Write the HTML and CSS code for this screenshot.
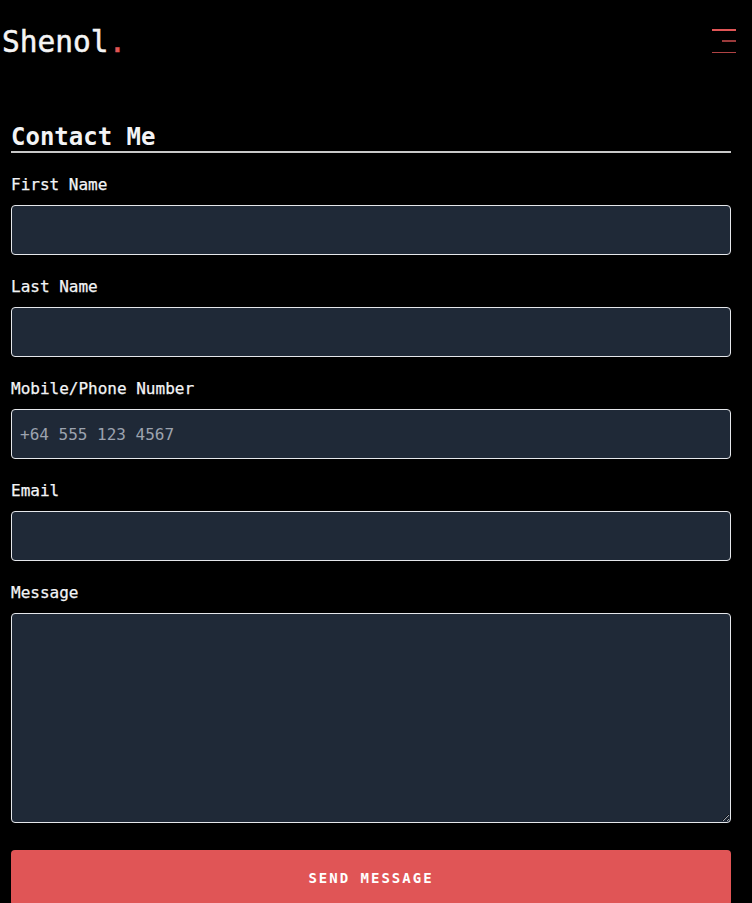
FILE: index.html
```html
<!DOCTYPE html>
<html lang="en">
<head>
<meta charset="utf-8">
<title>Shenol - Contact</title>
<link rel="stylesheet" href="styles.css">
</head>
<body>
<header class="site-header">
  <div class="logo">Shenol<span class="dot">.</span></div>
  <button class="menu-btn" aria-label="Menu">
    <span class="bar bar-top"></span>
    <span class="bar bar-mid"></span>
    <span class="bar bar-bot"></span>
  </button>
</header>
<main class="contact">
  <h2 class="title">Contact Me</h2>
  <form class="form">
    <div class="field">
      <label class="label" for="fn">First Name</label>
      <input class="input" id="fn" type="text">
    </div>
    <div class="field">
      <label class="label" for="ln">Last Name</label>
      <input class="input" id="ln" type="text">
    </div>
    <div class="field">
      <label class="label" for="ph">Mobile/Phone Number</label>
      <input class="input" id="ph" type="tel" placeholder="+64 555 123 4567">
    </div>
    <div class="field">
      <label class="label" for="em">Email</label>
      <input class="input" id="em" type="email">
    </div>
    <div class="field">
      <label class="label" for="msg">Message</label>
      <textarea class="input textarea" id="msg"></textarea>
    </div>
    <button class="submit" type="button">SEND MESSAGE</button>
  </form>
</main>
</body>
</html>
```
FILE: styles.css
```css
html, body {
  margin: 0;
  padding: 0;
  background: #000;
  color: #f3f4f6;
  font-family: "DejaVu Sans Mono", "Liberation Mono", monospace;
}
.site-header {
  height: 82px;
  display: flex;
  align-items: center;
  justify-content: space-between;
  padding: 0 16px 0 2px;
}
.logo {
  font-size: 29.5px;
  line-height: 36px;
  color: #f5f5f5;
  -webkit-text-stroke: 0.5px #f5f5f5;
  margin-top: 2px;
}
.dot {
  color: #e05556;
  -webkit-text-stroke: 0.5px #e05556;
}
.menu-btn {
  background: none;
  border: 0;
  padding: 0;
  width: 24px;
  height: 24px;
  display: flex;
  flex-direction: column;
  justify-content: space-between;
  align-items: flex-end;
}
.bar {
  display: block;
  height: 1.5px;
  background: #e05556;
}
.bar-top { width: 24px; }
.bar-mid { width: 14px; background: #9a3a3b; }
.bar-bot { width: 24px; background: #b04344; }
.contact {
  width: 720px;
  padding: 0 0 0 11px;
}
.title {
  margin: 41px 0 20px;
  font-size: 24px;
  line-height: 28px;
  font-weight: bold;
  border-bottom: 2px solid #c8c8c8;
}
.form {
  display: flex;
  flex-direction: column;
}
.field {
  display: flex;
  flex-direction: column;
  margin-bottom: 20px;
}
.label {
  font-size: 16px;
  line-height: 24px;
  margin-bottom: 8px;
  color: #f3f4f6;
  -webkit-text-stroke: 0.25px #f3f4f6;
}
.input {
  box-sizing: border-box;
  display: block;
  width: 720px;
  height: 50px;
  margin: 0;
  padding: 0 8px;
  background: #1f2937;
  border: 1px solid #e5e7eb;
  border-radius: 4px;
  color: #f3f4f6;
  font-family: inherit;
  font-size: 16px;
  outline: none;
}
.input::placeholder {
  color: #9ca3af;
}
.textarea {
  height: 210px;
  padding: 8px;
  resize: vertical;
}
.submit {
  margin-top: 7px;
  height: 56px;
  width: 720px;
  border: 0;
  border-radius: 4px;
  background: #e05556;
  color: #fff;
  font-family: inherit;
  font-weight: bold;
  font-size: 14px;
  letter-spacing: 2px;
}
```
